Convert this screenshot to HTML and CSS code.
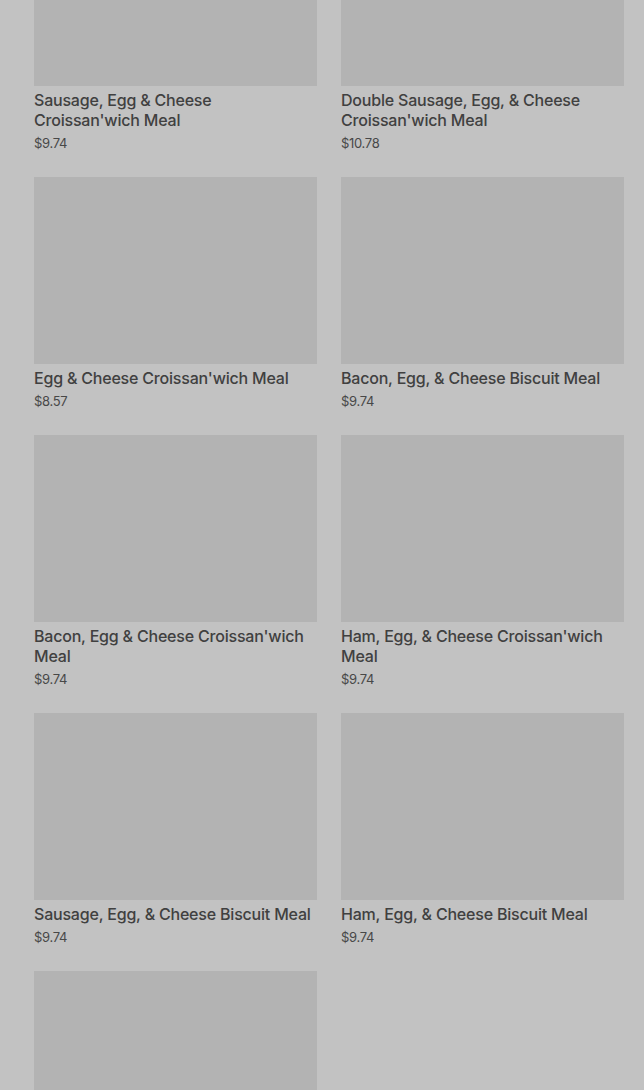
FILE: index.html
```html
<html lang="en">
  <head>
    <meta charset="UTF-8" />
    <meta name="viewport" content="width=device-width, initial-scale=1.0" />
    <title>Menu</title>
    <link rel="stylesheet" href="styles.css">
  </head>
  <body>
    <div class="menu">
      <div class="item">
        <div class="photo"></div>
        <div class="name">Sausage, Egg &amp; Cheese Croissan'wich Meal</div>
        <div class="price">$9.74</div>
      </div>
      <div class="item">
        <div class="photo"></div>
        <div class="name">Double Sausage, Egg, &amp; Cheese Croissan'wich Meal</div>
        <div class="price">$10.78</div>
      </div>
      <div class="item">
        <div class="photo"></div>
        <div class="name">Egg &amp; Cheese Croissan'wich Meal</div>
        <div class="price">$8.57</div>
      </div>
      <div class="item">
        <div class="photo"></div>
        <div class="name">Bacon, Egg, &amp; Cheese Biscuit Meal</div>
        <div class="price">$9.74</div>
      </div>
      <div class="item">
        <div class="photo"></div>
        <div class="name">Bacon, Egg &amp; Cheese Croissan'wich Meal</div>
        <div class="price">$9.74</div>
      </div>
      <div class="item">
        <div class="photo"></div>
        <div class="name">Ham, Egg, &amp; Cheese Croissan'wich Meal</div>
        <div class="price">$9.74</div>
      </div>
      <div class="item">
        <div class="photo"></div>
        <div class="name">Sausage, Egg, &amp; Cheese Biscuit Meal</div>
        <div class="price">$9.74</div>
      </div>
      <div class="item">
        <div class="photo"></div>
        <div class="name">Ham, Egg, &amp; Cheese Biscuit Meal</div>
        <div class="price">$9.74</div>
      </div>
      <div class="item">
        <div class="photo"></div>
      </div>
    </div>
  </body>
</html>
```

FILE: styles.css
```css
body {
  margin: 0;
  background-color: #c2c2c2;
  font-family: Inter, "Noto Sans", sans-serif;
  color: #3d3d3d;
  height: 1090px;
  overflow: hidden;
}

.menu {
  display: grid;
  grid-template-columns: repeat(2, 283px);
  column-gap: 24px;
  padding: 0 20px 0 34px;
  margin-top: -101px;
}

.item {
  padding-bottom: 24px;
}

.photo {
  height: 187px;
  background-color: #b3b3b3;
}

.name {
  margin-top: 4px;
  font-size: 16px;
  font-weight: 500;
  line-height: 20px;
  letter-spacing: -0.2px;
  color: #404040;
}

.price {
  margin-top: 3px;
  font-size: 13px;
  font-weight: 400;
  line-height: 20px;
  color: #484848;
  letter-spacing: -0.3px;
}
```
